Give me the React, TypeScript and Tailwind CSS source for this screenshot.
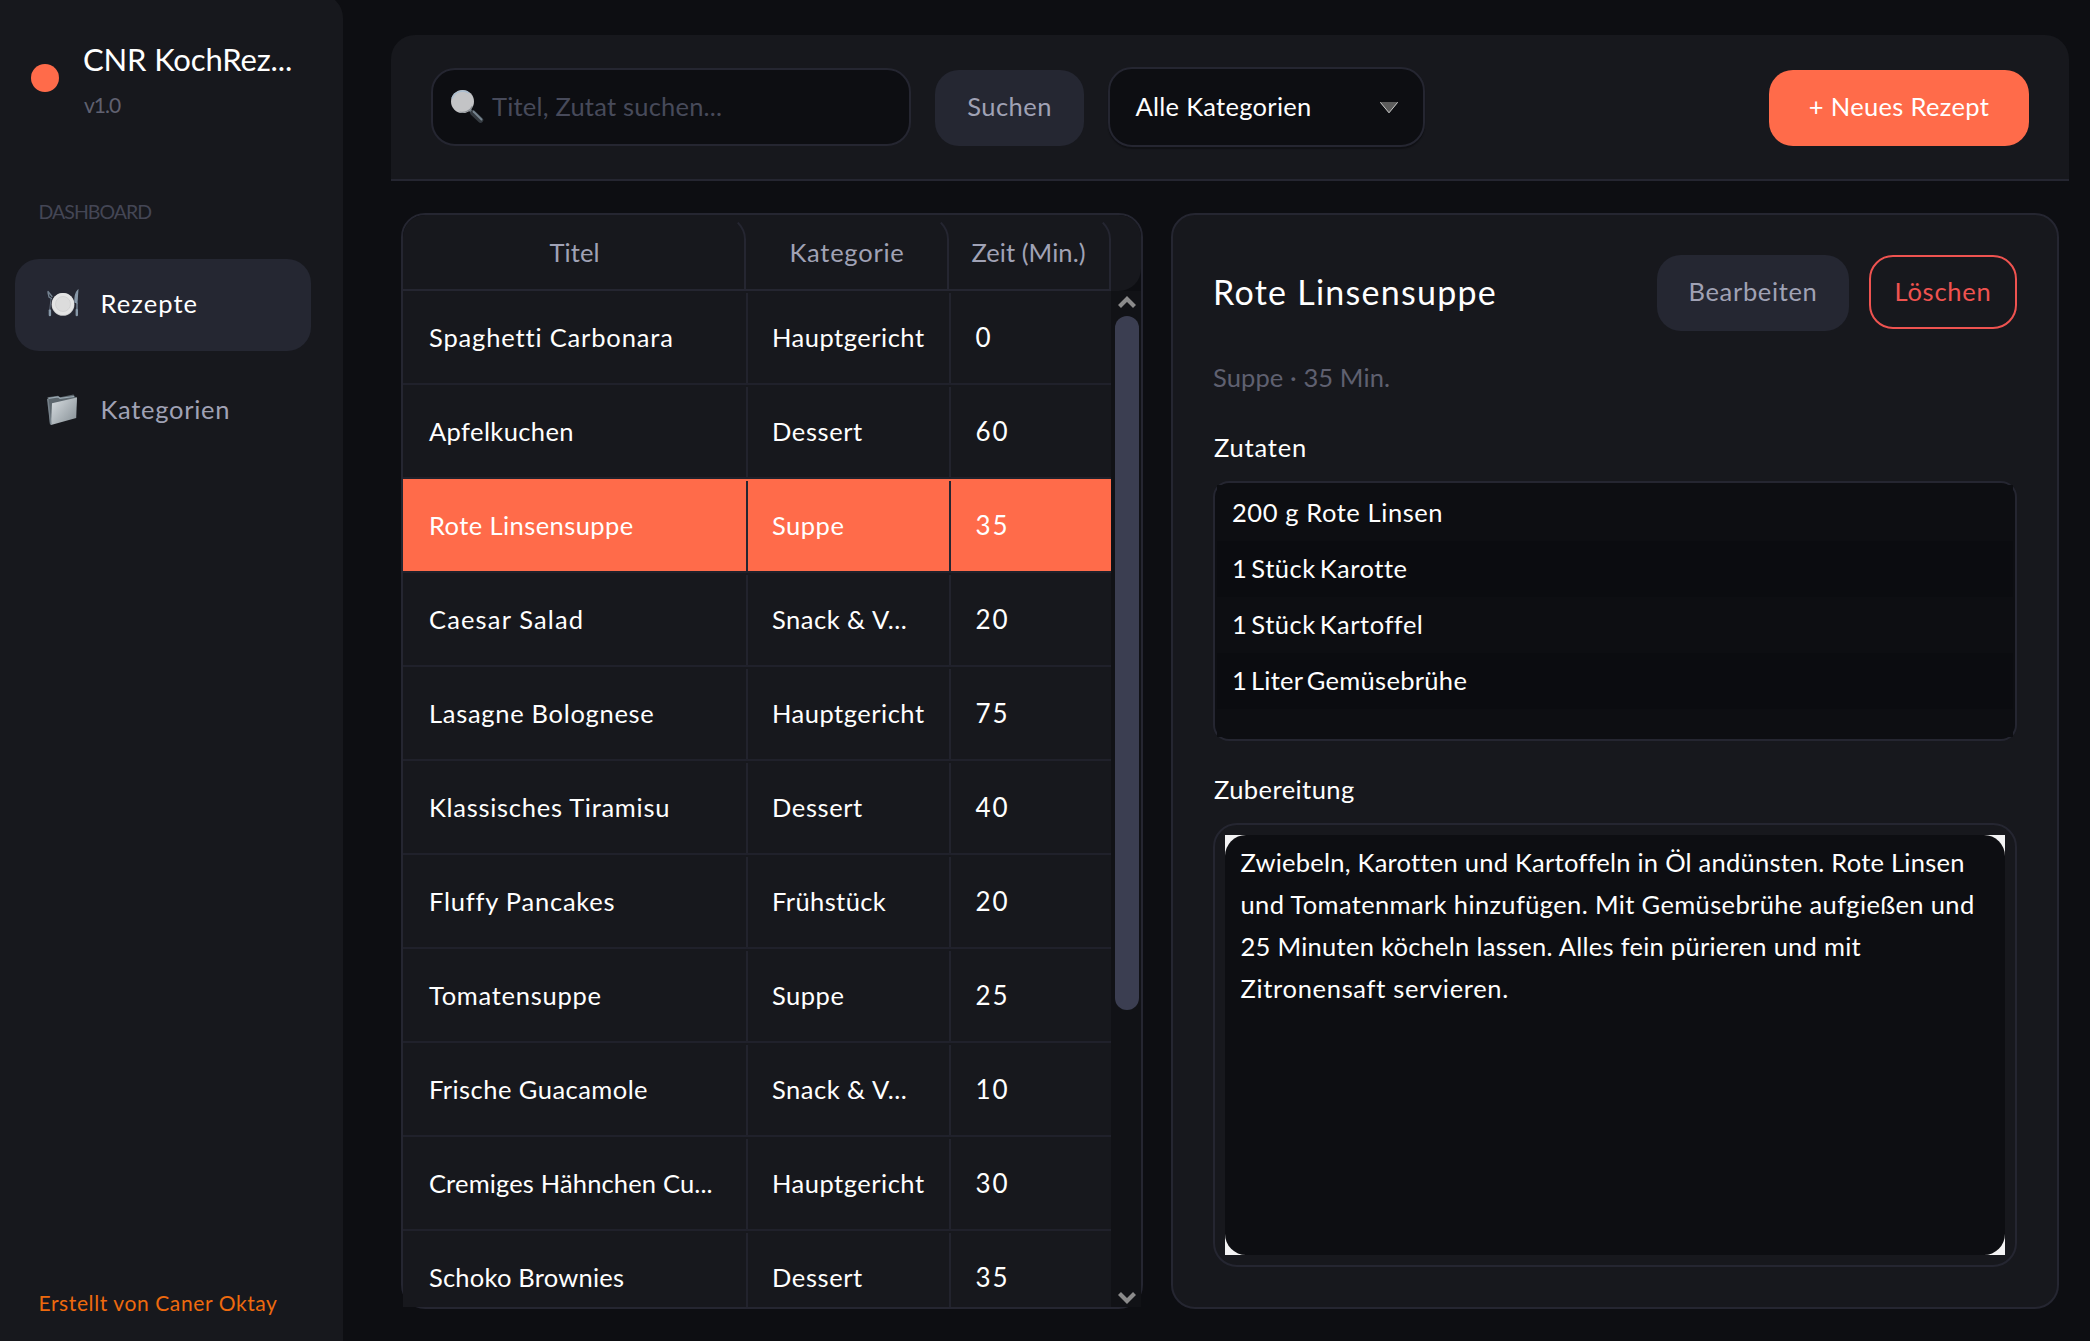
type Recipe = {
  title: string;
  titleCls: string;
  category: string;
  categoryCls: string;
  minutes: string;
  selected?: boolean;
};

const recipes: Recipe[] = [
  { title: "Spaghetti Carbonara", titleCls: "tracking-[0.84px]", category: "Hauptgericht", categoryCls: "tracking-[0.5px]", minutes: "0" },
  { title: "Apfelkuchen", titleCls: "tracking-[0.4px]", category: "Dessert", categoryCls: "tracking-[0.6px]", minutes: "60" },
  { title: "Rote Linsensuppe", titleCls: "tracking-[0.42px]", category: "Suppe", categoryCls: "tracking-[0.5px]", minutes: "35", selected: true },
  { title: "Caesar Salad", titleCls: "tracking-[1.15px]", category: "Snack & V...", categoryCls: "tracking-[0.5px]", minutes: "20" },
  { title: "Lasagne Bolognese", titleCls: "tracking-[0.7px]", category: "Hauptgericht", categoryCls: "tracking-[0.5px]", minutes: "75" },
  { title: "Klassisches Tiramisu", titleCls: "tracking-[0.72px]", category: "Dessert", categoryCls: "tracking-[0.6px]", minutes: "40" },
  { title: "Fluffy Pancakes", titleCls: "tracking-[0.78px]", category: "Frühstück", categoryCls: "tracking-[0.4px]", minutes: "20" },
  { title: "Tomatensuppe", titleCls: "tracking-[0.72px]", category: "Suppe", categoryCls: "tracking-[0.5px]", minutes: "25" },
  { title: "Frische Guacamole", titleCls: "tracking-[0.46px]", category: "Snack & V...", categoryCls: "tracking-[0.5px]", minutes: "10" },
  { title: "Cremiges Hähnchen Cu...", titleCls: "tracking-[0.15px]", category: "Hauptgericht", categoryCls: "tracking-[0.5px]", minutes: "30" },
  { title: "Schoko Brownies", titleCls: "tracking-[0.22px]", category: "Dessert", categoryCls: "tracking-[0.6px]", minutes: "35" },
];

const ingredients = [
  { text: "200 g Rote Linsen", cls: "tracking-[0.58px] bg-[#0d0e12]" },
  { text: "1 Stück Karotte", cls: "tracking-[0.52px] [word-spacing:-3px] bg-[#0b0c10]" },
  { text: "1 Stück Kartoffel", cls: "tracking-[0.52px] [word-spacing:-3px] bg-[#0d0e12]" },
  { text: "1 Liter Gemüsebrühe", cls: "tracking-[0.3px] [word-spacing:-3px] bg-[#0b0c10]" },
];

const steps = [
  { text: "Zwiebeln, Karotten und Kartoffeln in Öl andünsten. Rote Linsen", cls: "tracking-[0.25px]" },
  { text: "und Tomatenmark hinzufügen. Mit Gemüsebrühe aufgießen und", cls: "tracking-[0.36px]" },
  { text: "25 Minuten köcheln lassen. Alles fein pürieren und mit", cls: "tracking-[0.27px]" },
  { text: "Zitronensaft servieren.", cls: "tracking-[0.68px]" },
];

function PlateIcon() {
  return (
    <svg className="h-8 w-8 shrink-0" viewBox="0 0 32 32" fill="none">
      <g stroke="#8798a8" strokeLinecap="round">
        <path d="M1 4.500 2 9l2.500 1.500M1 3.500l4 5" strokeWidth="1.300" opacity=".8" />
        <path d="M4 11 2.800 21" strokeWidth="1" opacity=".6" />
        <path d="M2.900 22.500v4.500" strokeWidth="2.400" />
        <path d="M30.800 2.500c-2.200 2.200-3 6.500-2.900 11.500l2 .8z" strokeWidth="1.200" fill="#8798a8" />
        <path d="M30 15v6" strokeWidth="1.200" />
        <path d="M29.800 22v5" strokeWidth="2.400" />
      </g>
      <circle cx="16" cy="16.400" r="11.400" fill="#c9cacb" />
      <circle cx="16" cy="16" r="11" fill="#e4e4e4" />
      <circle cx="16" cy="16" r="7.500" fill="#dcdcdc" stroke="#cfcfd0" strokeWidth=".8" />
    </svg>
  );
}

function FolderIcon() {
  return (
    <svg className="h-8 w-8 shrink-0" viewBox="0 0 32 32" fill="none">
      <defs>
        <linearGradient id="folder" x1="4" y1="8" x2="28" y2="28" gradientUnits="userSpaceOnUse">
          <stop offset="0" stopColor="#d3d9dd" />
          <stop offset="1" stopColor="#8b949a" />
        </linearGradient>
      </defs>
      <path d="M0.500 3.200 11 1.700l2 1.600L26.500.5l1.500 2.300 2 .6-2 18L3 30.500z" fill="#5d676e" />
      <path d="M1.500 4.300 11 2.800l2 1.500L27 2.500" stroke="#9aa8b2" strokeWidth="1.200" />
      <path d="M5 9.200 30 3.600 29.200 24 4 31z" fill="url(#folder)" />
      <path d="M.8 5 3.800 30.500" stroke="#76818a" strokeWidth="1.600" />
    </svg>
  );
}

function SearchIcon() {
  return (
    <svg className="h-[34px] w-[34px] shrink-0" viewBox="0 0 34 34" fill="none">
      <path d="m20 21 3.500 3.500" stroke="#6c7880" strokeWidth="3" />
      <path d="m23 24 7.500 7" stroke="#343a40" strokeWidth="5.500" strokeLinecap="round" />
      <path d="m23.500 22.500 8 8" stroke="#76848f" strokeWidth="1.800" strokeLinecap="round" />
      <circle cx="12.500" cy="12.500" r="11.500" fill="#c3c4c6" />
      <path d="M2 9.500a11.300 11.300 0 0 1 17-5.500" stroke="#a9bdd0" strokeWidth="1.400" />
      <path d="M22.500 17a11.300 11.300 0 0 1-13 6" stroke="#8a8f94" strokeWidth="1.200" />
    </svg>
  );
}

function HeaderDivider() {
  return (
    <svg className="absolute right-0 top-[7px] h-[67px] w-[9px]" viewBox="0 0 9 67" fill="none">
      <path d="M.8.600C5 5 8 10 8 17v50" stroke="#252631" strokeWidth="2" />
    </svg>
  );
}

function Chevron({ d }: { d: string }) {
  return (
    <svg className="h-3 w-[18px]" viewBox="0 0 18 12" fill="none">
      <path d={d} stroke="#8b8b8b" strokeWidth="4.200" />
    </svg>
  );
}

export default function App() {
  return (
    <div className="flex h-[1341px] w-[2090px] overflow-hidden bg-[#0d0e12] font-['Lato',sans-serif] text-[25.5px] text-white [font-variant-ligatures:none]">
      <aside className="-mt-1.5 flex h-[1347px] w-[343px] shrink-0 flex-col rounded-tr-3xl bg-[#17181d]">
        <div className="mt-[47px] flex items-center gap-6 pl-[31px]">
          <div className="mt-[-2px] h-7 w-7 shrink-0 rounded-full bg-[#ff6b4a]" />
          <div>
            <h1 className="text-[31px] leading-9 tracking-[-0.15px]">CNR KochRez...</h1>
            <p className="mt-4 pl-px text-[21px] leading-6 tracking-[-1px] text-[#606170]">v1.0</p>
          </div>
        </div>
        <p className="mt-[83px] pl-[38.500px] text-[19.500px] leading-6 tracking-[-0.95px] text-[#444655]">DASHBOARD</p>
        <nav className="mt-[35px] flex flex-col gap-3.5 pl-[15px]">
          <a className="flex h-[92px] w-[296px] items-center gap-[21.500px] rounded-3xl bg-[#252732] pb-[3px] pl-8 tracking-[1.08px]">
            <PlateIcon />
            Rezepte
          </a>
          <a className="flex h-[92px] w-[296px] items-center gap-[21.500px] rounded-3xl pb-[3px] pl-8 tracking-[0.72px] text-[#a0a2b5]">
            <FolderIcon />
            Kategorien
          </a>
        </nav>
        <p className="mt-auto pb-[26px] pl-[38.500px] text-[21px] leading-6 tracking-[0.6px] text-[#ee6a0e]">Erstellt von Caner Oktay</p>
      </aside>

      <main className="flex flex-1 flex-col pb-8 pl-12 pr-[21px] pt-[35px]">
        <header className="flex h-[146px] shrink-0 items-center rounded-t-3xl border-b-2 border-[#252631] bg-[#17181d] pl-10 pr-10">
          <div className="flex h-[78px] w-[480px] items-center gap-[8px] rounded-3xl border-2 border-[#252631] bg-[#0d0e12] pb-0.5 pl-[17px] tracking-[0.21px] text-[#474a5a]">
            <SearchIcon />
            Titel, Zutat suchen...
          </div>
          <button className="ml-6 mt-0.5 flex h-[76px] w-[149px] items-center justify-center rounded-3xl bg-[#252732] pb-[3px] tracking-[0.47px] text-[#a0a2b5]">
            Suchen
          </button>
          <div className="ml-6 flex h-20 w-[317px] items-center justify-between rounded-3xl border-2 border-[#252631] bg-[#0d0e12] pb-px pl-[25.500px] pr-[25px] tracking-[0.29px] shadow-[0_2px_1px_#101115]">
            Alle Kategorien
            <svg className="mt-0.5 h-3 w-[18px]" viewBox="0 0 18 12">
              <path d="M0 0h18L9 11z" fill="#5c5c5c" />
              <path d="m.3.300 8.700 10.500L17.700.3" fill="none" stroke="#c9c9c9" strokeWidth="1" />
            </svg>
          </div>
          <button className="ml-auto mt-0.5 flex h-[76px] w-[260px] items-center justify-center rounded-3xl bg-[#ff6b4a] pb-[3px] tracking-[0.34px]">
            + Neues Rezept
          </button>
        </header>

        <div className="mt-8 flex h-[1096px] gap-7 px-2.5">
          <section className="flex w-[742px] shrink-0 flex-col rounded-3xl border-2 border-[#252631]">
            <div className="flex h-[76px] shrink-0 text-[#a0a2b5]">
              <div className="relative flex w-[343px] items-center justify-center rounded-tl-[22px] border-b-2 border-[#252631] bg-[#17181d] tracking-[0.09px]">
                Titel
                <HeaderDivider />
              </div>
              <div className="relative flex w-[203px] items-center justify-center border-b-2 border-[#252631] bg-[#17181d] pr-px tracking-[0.75px]">
                Kategorie
                <HeaderDivider />
              </div>
              <div className="relative flex w-[162px] items-center justify-center border-b-2 border-[#252631] bg-[#17181d] pr-[3px] tracking-[0.07px]">
                Zeit (Min.)
                <HeaderDivider />
              </div>
              <div className="w-[30px] rounded-r-[22px] bg-[#17181d]" />
            </div>
            <div className="flex h-[1016px]">
              <div className="w-[708px] overflow-hidden bg-[#17181d]">
                {recipes.map((r) => (
                  <div key={r.title} className={`flex h-[94px] border-b-2 border-[#20212b] ${r.selected ? "bg-[#ff6b4a]" : ""}`}>
                    <div className={`mt-0.5 flex w-[345px] items-center whitespace-nowrap border-r-2 pb-px pl-[26px] ${r.selected ? "border-[#252631]" : "border-[#22232d]"} ${r.titleCls}`}>
                      {r.title}
                    </div>
                    <div className={`mt-0.5 flex w-[203px] items-center whitespace-nowrap border-r-2 pb-px pl-6 ${r.selected ? "border-[#252631]" : "border-[#22232d]"} ${r.categoryCls}`}>
                      {r.category}
                    </div>
                    <div className="mt-0.5 flex items-center pb-px pl-[24.500px] text-[26px] tracking-[1.800px]">{r.minutes}</div>
                  </div>
                ))}
              </div>
              <div className="flex w-[30px] flex-col items-center justify-between bg-[#111216] pb-[3px] pl-0.5 pt-[5px]">
                <Chevron d="M1.500 10.500 9 3l7.500 7.500" />
                <div className="mb-auto mt-2 h-[694px] w-6 rounded-full bg-[#3b3e51]" />
                <Chevron d="M1.500 1.500 9 9l7.500-7.500" />
              </div>
            </div>
          </section>

          <section className="flex flex-1 flex-col rounded-3xl border-2 border-[#252631] bg-[#17181d] px-10 pt-10">
            <div className="flex h-[76px] shrink-0 items-start">
              <h2 className="-ml-0.5 mr-auto self-center pb-[3px] pl-0.5 text-[34px] leading-10 tracking-[1.260px]">Rote Linsensuppe</h2>
              <button className="flex h-[76px] w-[192px] items-center justify-center rounded-3xl bg-[#252732] pb-[3px] tracking-[0.65px] text-[#a0a2b5]">
                Bearbeiten
              </button>
              <button className="ml-5 flex h-[74px] w-[148px] items-center justify-center rounded-3xl border-2 border-[#ef5350] pb-px tracking-[0.75px] text-[#ef5350]">
                Löschen
              </button>
            </div>
            <p className="mt-7 leading-9 tracking-[0.11px] text-[#5f6070]">Suppe · 35 Min.</p>
            <h3 className="mt-[34px] pl-px leading-9 tracking-[0.8px]">Zutaten</h3>
            <div className="mt-4 h-[260px] shrink-0 rounded-2xl border-2 border-[#252631] bg-[#0d0e12]">
              <ul className="m-0.5 h-[252px] bg-[#0d0e12]">
                {ingredients.map((i) => (
                  <li key={i.text} className={`flex h-14 items-center pb-px pl-[15px] ${i.cls}`}>
                    {i.text}
                  </li>
                ))}
              </ul>
            </div>
            <h3 className="mt-[30px] pl-px leading-9 tracking-[0.43px]">Zubereitung</h3>
            <div className="mt-4 h-[444px] shrink-0 rounded-3xl border-2 border-[#252631] p-2.5">
              <div className="h-[420px] bg-[#f3f3f4]">
                <div className="h-full rounded-[21px] bg-[#0d0e12] pl-[15.500px] pt-1.5">
                  {steps.map((s) => (
                    <p key={s.text} className={`whitespace-nowrap leading-[42px] ${s.cls}`}>
                      {s.text}
                    </p>
                  ))}
                </div>
              </div>
            </div>
          </section>
        </div>
      </main>
    </div>
  );
}
